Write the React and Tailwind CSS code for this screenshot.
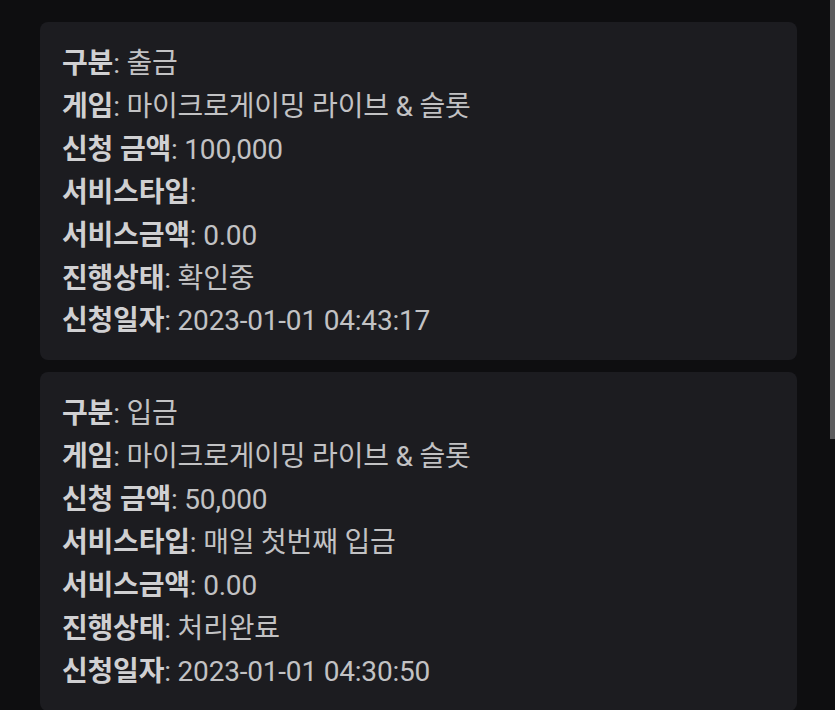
import React from 'react';

const records = [
  [
    ['구분', '출금'],
    ['게임', '마이크로게이밍 라이브 & 슬롯'],
    ['신청 금액', '100,000'],
    ['서비스타입', ''],
    ['서비스금액', '0.00'],
    ['진행상태', '확인중'],
    ['신청일자', '2023-01-01 04:43:17'],
  ],
  [
    ['구분', '입금'],
    ['게임', '마이크로게이밍 라이브 & 슬롯'],
    ['신청 금액', '50,000'],
    ['서비스타입', '매일 첫번째 입금'],
    ['서비스금액', '0.00'],
    ['진행상태', '처리완료'],
    ['신청일자', '2023-01-01 04:30:50'],
  ],
];

export default function App() {
  return (
    <div
      className="relative h-[710px] overflow-hidden bg-[#0e0e10] text-[#c2c2c4]"
      style={{ fontFamily: 'Roboto, "Noto Sans CJK KR", sans-serif' }}
    >
      {/* Cards */}
      <div className="flex flex-col gap-[12px] pt-[22px] pl-[40px] w-[797px]">
        {records.map((rows, i) => (
          <div key={i} className="bg-[#1c1c20] rounded-[8px] pt-[21px] pb-[17px] px-[22px]">
            {rows.map(([label, value]) => (
              <div key={label} className="text-[28px] leading-[42.9px] whitespace-nowrap tracking-[-0.2px]">
                <span className="font-bold text-[#d0d0d2]">{label}</span>: {value}
              </div>
            ))}
          </div>
        ))}
      </div>

      {/* Scrollbar */}
      <div className="absolute top-0 right-0 w-[5px] h-[439px] bg-[#5c5c5e]" />
    </div>
  );
}
